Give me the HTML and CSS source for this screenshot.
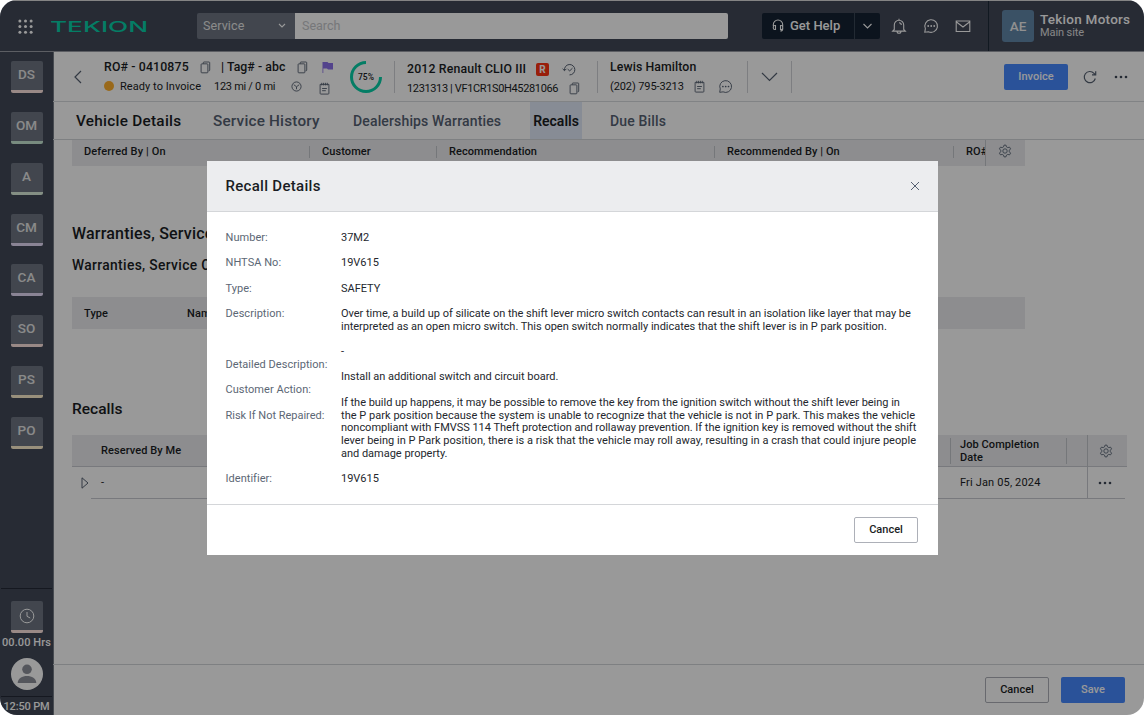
FILE: index.html
```
<!DOCTYPE html>
<html lang="en">
<head>
<meta charset="utf-8">
<title>Recall Details</title>
<link rel="stylesheet" href="styles.css">
</head>
<body>
<svg class="defs" width="0" height="0">
  <symbol id="copy" viewBox="0 0 12 14"><path d="M3.600 2.800V1.800q0-.8.800-.8h5.400q.8 0 .8.800v8q0 .8-.8.800H9.400M2 3h5.800q.8 0 .8.800v8.200q0 .8-.8.800H2q-.8 0-.8-.8V3.800q0-.8.800-.8z"/></symbol>
  <symbol id="note" viewBox="0 0 12 14"><path d="M1.200 2.500h9.600v9.800q0 .8-.8.800H2q-.8 0-.8-.8zM3 .8v2.800M5 .8v2.800M7 .8v2.800M9 .8v2.800M3.400 7h5.200M3.400 9.400h4"/></symbol>
  <symbol id="chat" viewBox="0 0 16 16"><path d="M1.800 14.200l.6-3.600A6.300 6.300 0 1 1 5.400 13.700z"/><path class="dots" d="M5.200 8h.01M8.200 8h.01M11.200 8h.01"/></symbol>
  <symbol id="gear" viewBox="0 0 16 16"><circle cx="8" cy="8" r="2.500"/><path d="M6.900 1.300h2.200l.6 2 1.500.8 2-.5 1.200 2-1.500 1.500v1.800l1.500 1.500-1.200 2-2-.5-1.500.8-.6 2H6.900l-.6-2-1.500-.8-2 .5-1.200-2 1.500-1.500V7.100L1.600 5.600l1.200-2 2 .5 1.500-.8z"/></symbol>
  <symbol id="more" viewBox="0 0 14 4"><circle cx="2" cy="2" r="1.300"/><circle cx="7" cy="2" r="1.300"/><circle cx="12" cy="2" r="1.300"/></symbol>
</svg>
<div class="frame">
  <header class="topbar">
    <svg class="apps" viewBox="0 0 16 16"><g fill="#fff"><circle cx="2" cy="2" r="1.600"/><circle cx="8" cy="2" r="1.600"/><circle cx="14" cy="2" r="1.600"/><circle cx="2" cy="8" r="1.600"/><circle cx="8" cy="8" r="1.600"/><circle cx="14" cy="8" r="1.600"/><circle cx="2" cy="14" r="1.600"/><circle cx="8" cy="14" r="1.600"/><circle cx="14" cy="14" r="1.600"/></g></svg>
    <svg class="logo" viewBox="0 0 98 16"><text x="-1" y="13.500" textLength="98" lengthAdjust="spacingAndGlyphs">TEKION</text></svg>
    <div class="scope"><span>Service</span><svg class="chev" viewBox="0 0 8 6"><path d="M1 1l3 3 3-3"/></svg></div>
    <div class="search">Search</div>
    <div class="help">
      <div class="help-main"><svg class="headset" viewBox="0 0 12 13"><path d="M1.300 7V5.700a4.700 4.700 0 0 1 9.400 0V10q0 2-2.400 2M3.500 6.500v4H2.700Q1.300 10.500 1.300 9V8q0-1.500 1.400-1.500zM8.500 6.500v4h.8q1.400 0 1.400-1.500V8q0-1.500-1.400-1.500z"/></svg><span>Get Help</span></div>
      <div class="help-more"><svg viewBox="0 0 10 7"><path d="M1 1l4 4 4-4"/></svg></div>
    </div>
    <div class="top-icons">
      <svg viewBox="0 0 16 16"><path d="M3.300 11.500V7a4.700 4.700 0 0 1 9.400 0v4.500l1.600 1.600H1.700zM8 2.300V.8M6 13.200a2 2 0 0 0 4 0M8 4.700a2.300 2.300 0 0 1 2.300 2.300"/></svg>
      <svg viewBox="0 0 16 16"><use href="#chat"/></svg>
      <svg viewBox="0 0 16 16"><path d="M1.200 3h13.600v10.500H1.200zM1.500 4l6.500 5 6.500-5"/></svg>
    </div>
    <div class="account">
      <div class="avatar">AE</div>
      <div class="dealer"><b>Tekion Motors</b><span>Main site</span></div>
    </div>
  </header>
  <div class="below">
    <nav class="side">
      <div class="tiles">
        <div class="tile rose">DS</div><div class="tile green">OM</div><div class="tile mint">A</div><div class="tile lilac">CM</div><div class="tile lilac">CA</div><div class="tile rose">SO</div><div class="tile sand">PS</div><div class="tile sand">PO</div>
      </div>
      <div class="status">
        <div class="tile rose clock"><svg viewBox="0 0 16 16"><circle cx="8" cy="8" r="6.800"/><path d="M8 4v4.300l3.200 1.700"/></svg></div>
        <div class="hrs">00.00 Hrs</div>
        <svg class="person" viewBox="0 0 32 32"><circle cx="16" cy="16" r="16" fill="#fff"/><circle cx="16" cy="11.300" r="4.800"/><path d="M6.700 25c0-9.500 18.600-9.500 18.600 0z"/></svg>
        <div class="time">12:50 PM</div>
      </div>
    </nav>
    <main>
      <section class="ro">
        <svg class="back" viewBox="0 0 8 14"><path d="M7 1L1 7l6 6"/></svg>
        <div class="ro-info">
          <div class="row r1"><b class="ro-num">RO# - 0410875</b><svg class="ic cp"><use href="#copy"/></svg><b class="tag">| Tag# - abc</b><svg class="ic cp cp2"><use href="#copy"/></svg><svg class="flag" viewBox="0 0 11 12"><path d="M.5 1h5l1 1H11v6.500H6l-1-1H1.300V12H.5z"/></svg></div>
          <div class="row r2"><i class="dot"></i><span class="ready">Ready to Invoice</span><span class="miles">123 mi / 0 mi</span><svg class="wheel" viewBox="0 0 12 12"><circle cx="6" cy="6" r="5"/><path d="M3 4l3 2.300L9 4M6 6.300V9"/></svg><svg class="ic note"><use href="#note"/></svg></div>
        </div>
        <svg class="ring" viewBox="0 0 32 32"><path d="M30.500 16A14.500 14.500 0 1 1 16 1.500"/><text x="16" y="19.200">75%</text></svg>
        <i class="vline"></i>
        <div class="car">
          <div class="row r1"><b class="model">2012 Renault CLIO III</b><span class="badge">R</span><svg class="hist" viewBox="0 0 14 12"><path d="M2.500 7A5.200 5.200 0 1 1 7.500 11.400M.6 5.300l1.900 1.900 1.900-1.900M5.700 5.700l2 1.700 2.800-2.800"/></svg></div>
          <div class="row r2"><span class="vin">1231313 | VF1CR1S0H45281066</span><svg class="ic cp"><use href="#copy"/></svg></div>
        </div>
        <i class="vline"></i>
        <div class="cust">
          <div class="row r1"><b class="name">Lewis Hamilton</b></div>
          <div class="row r2"><span class="phone">(202) 795-3213</span><svg class="ic note"><use href="#note"/></svg><svg class="ic bubble"><use href="#chat"/></svg></div>
        </div>
        <i class="vline"></i>
        <svg class="expand" viewBox="0 0 17 10"><path d="M1 1l7.500 7.500L16 1"/></svg>
        <i class="vline"></i>
        <div class="ro-actions">
          <button class="btn primary">Invoice</button>
          <svg class="refresh" viewBox="0 0 14 14"><path d="M12.300 8.500A5.600 5.600 0 1 1 11 3.300l1.200 1.400M12.700 1.300v3.500H9"/></svg>
          <svg class="more"><use href="#more"/></svg>
        </div>
      </section>
      <div class="tabs"><span class="tab t1">Vehicle Details</span><span class="tab t2">Service History</span><span class="tab t3">Dealerships Warranties</span><span class="tab t4">Recalls</span><span class="tab t5">Due Bills</span></div>
      <div class="content">
        <div class="thead jobs"><span class="c1">Deferred By | On</span><span class="c2">Customer</span><span class="c3">Recommendation</span><span class="c4">Recommended By | On</span><span class="c5">RO#</span><span class="cfg"><svg><use href="#gear"/></svg></span></div>
        <h2 class="h-war">Warranties, Service</h2>
        <h3>Warranties, Service C</h3>
        <div class="thead plans"><span class="p1">Type</span><span>Name</span></div>
        <h2 class="h-rec">Recalls</h2>
        <div class="recalls">
          <div class="thead rec"><span class="r-by">Reserved By Me</span><span class="r-date"><em>Job Completion<br>Date</em></span><span class="cfg"><svg><use href="#gear"/></svg></span></div>
          <div class="line"><svg class="tri" viewBox="0 0 8 12"><path d="M1 .8l6 5.200-6 5.200z"/></svg><div class="cells"><span class="r-by">-</span><span class="r-date">Fri Jan 05, 2024</span><span class="cfg"><svg class="more"><use href="#more"/></svg></span></div></div>
        </div>
      </div>
      <footer class="foot"><button class="btn plain">Cancel</button><button class="btn primary">Save</button></footer>
    </main>
  </div>
  <div class="overlay"></div>
  <div class="modal">
    <div class="m-head"><h1>Recall Details</h1><svg viewBox="0 0 10 10"><path d="M1 1l8 8M9 1L1 9"/></svg></div>
    <div class="m-body">
      <div class="labels"><span>Number:</span><span>NHTSA No:</span><span>Type:</span><span class="tall2">Description:</span><span>Detailed Description:</span><span>Customer Action:</span><span class="tall4">Risk If Not Repaired:</span><span>Identifier:</span></div>
      <div class="values">
        <p>37M2</p><p>19V615</p><p>SAFETY</p>
        <p>Over time, a build up of silicate on the shift lever micro switch contacts can result in an isolation like layer that may be<br>interpreted as an open micro switch. This open switch normally indicates that the shift lever is in P park position.</p>
        <p>-</p>
        <p>Install an additional switch and circuit board.</p>
        <p>If the build up happens, it may be possible to remove the key from the ignition switch without the shift lever being in<br><span class="wide">the P park position because the system is unable to recognize that the vehicle is not in P park. This makes the vehicle</span><br>noncompliant with FMVSS 114 Theft protection and rollaway prevention. If the ignition key is removed without the shift<br><span class="wide">lever being in P Park position, there is a risk that the vehicle may roll away, resulting in a crash that could injure people</span><br>and damage property.</p>
        <p>19V615</p>
      </div>
    </div>
    <div class="m-foot"><button class="btn plain">Cancel</button></div>
  </div>
</div>
</body>
</html>
```

FILE: styles.css
```
* { box-sizing: border-box; }
body { margin: 0; background: #fff; font: 11px/13px Roboto, "Liberation Sans", sans-serif; color: #1a1d24; }
svg { display: block; flex: none; fill: none; stroke: #566172; stroke-width: 1; }
b { font-weight: 500; }
h1, h2, h3, p { margin: 0; }
.defs { position: absolute; }
.dots { stroke-width: 1.800; stroke-linecap: round; }
.frame { position: relative; width: 1144px; height: 715px; border-radius: 17px; overflow: hidden; display: flex; flex-direction: column; background: #fff; }

/* Top bar */
.topbar { height: 52px; flex: none; display: flex; align-items: center; background: #414858; border-top: 1px solid #dcdcdc; border-bottom: 1px solid #9a9da5; color: #fff; }
.topbar svg { stroke: #fff; stroke-width: 1.100; }
.topbar .apps { width: 15px; height: 15px; margin-left: 18px; stroke: none; }
.topbar .logo { width: 98px; height: 16px; margin-left: 18px; stroke: none; }
.logo text { font: 500 14.500px Inter, sans-serif; fill: #08d0a8; }
.scope { width: 98px; height: 26px; margin-left: 48px; padding: 0 9px 1px 6px; border-radius: 2px 0 0 2px; background: #6e7683; color: #e8e8e8; display: flex; align-items: center; justify-content: space-between; font-size: 12.500px; letter-spacing: .1px; }
.scope .chev { width: 8px; height: 6px; }
.search { width: 433px; height: 26px; padding-left: 7px; border-radius: 0 2px 2px 0; background: #fff; color: #c5c7cb; font-size: 12.500px; line-height: 25px; }
.help { display: flex; width: 118px; height: 26px; margin-left: 34px; border-radius: 2px; overflow: hidden; background: #142232; }
.help-main { width: 93px; display: flex; align-items: center; padding: 0 0 1px 10px; gap: 6px; font-size: 13px; font-weight: 500; border-right: 1px solid #3a4656; }
.headset { width: 12px; height: 13px; }
.help-more { flex: 1; display: flex; align-items: center; justify-content: center; }
.help-more svg { width: 11px; height: 7px; }
.top-icons { display: flex; gap: 16px; margin-left: 11px; }
.top-icons svg { width: 16px; height: 16px; }
.account { display: flex; align-items: center; align-self: stretch; margin-left: 17px; padding-left: 13px; border-left: 1px solid #1d2a38; }
.avatar { width: 32px; height: 32px; border-radius: 3px; background: #6187a8; color: #f0f0f0; font-size: 13.500px; font-weight: 500; line-height: 32px; text-align: center; }
.dealer { margin-left: 6px; padding-bottom: 1px; display: flex; flex-direction: column; }
.dealer b { font-size: 13.500px; letter-spacing: .25px; }
.dealer span { letter-spacing: -.1px; color: #e0e0e0; }

/* Sidebar */
.below { flex: 1; display: flex; min-height: 0; }
.side { width: 54px; margin-right: -1px; background: #414858; display: flex; flex-direction: column; justify-content: space-between; align-items: center; border-right: 1px solid #777d88; }
.tiles { display: flex; flex-direction: column; gap: 18.850px; padding-top: 9px; }
.tile { width: 32px; height: 32px; border-radius: 2px; background: #6e7683; border-bottom: 3px solid; color: #e6e6e6; font-size: 13.500px; font-weight: 500; line-height: 27px; text-align: center; }
.rose { border-bottom-color: #ffe5e0; }
.green { border-bottom-color: #c8e8d4; }
.mint { border-bottom-color: #dcefdc; }
.lilac { border-bottom-color: #e6dcf8; }
.sand { border-bottom-color: #fff0cf; }
.status { width: 51px; border-top: 1px solid #232936; display: flex; flex-direction: column; align-items: center; color: #fff; font-weight: 500; }
.clock { margin-top: 12px; display: flex; align-items: center; justify-content: center; }
.clock svg { width: 16px; height: 16px; stroke: #fff; }
.hrs { margin-top: 3px; letter-spacing: .1px; white-space: nowrap; }
.person { width: 32px; height: 32px; margin-top: 9px; stroke: none; fill: #8d8f99; }
.time { width: 51px; margin-top: 6px; padding-top: 3px; height: 19px; border-top: 1px solid #232936; text-align: center; letter-spacing: -.15px; }

/* Repair order bar */
main { flex: 1; display: flex; flex-direction: column; min-width: 0; }
.ro { height: 50px; display: flex; align-items: center; border-bottom: 1px solid #d8dade; }
.back { width: 8px; height: 14px; margin-left: 21px; stroke-width: 1.200; }
.row { display: flex; align-items: center; height: 19px; white-space: nowrap; }
.row b { font-size: 12.300px; }
.ic { width: 11px; height: 13px; }
.ro-info { width: 240px; margin-left: 22px; }
.ro-num { width: 96px; letter-spacing: .15px; }
.tag { width: 75px; margin-left: 10px; letter-spacing: .05px; }
.cp2 { margin-left: 1px; }
.flag { width: 11px; height: 12px; margin-left: 14px; fill: #8b70ea; stroke: none; }
.dot { width: 10px; height: 10px; border-radius: 5px; background: #ffb02e; }
.ready { width: 94px; margin-left: 6px; letter-spacing: .06px; }
.miles { width: 77px; letter-spacing: -.28px; }
.wheel { width: 11px; height: 11px; }
.ro-info .note { margin: 5px 0 0 17px; }
.ring { width: 32px; height: 32px; margin-left: 6px; stroke: #08d0a8; stroke-width: 3; }
.ring text { font-size: 8.500px; font-weight: 500; fill: #1a1d24; stroke: none; text-anchor: middle; }
.vline { width: 1px; height: 32px; background: #d0d3d8; }
.ring + .vline { margin-left: 12px; }
.car { width: 190px; margin-left: 12px; padding-top: 5px; }
.model { width: 129px; letter-spacing: .15px; }
.badge { width: 13px; height: 13px; border-radius: 2px; background: #ff3312; color: #fff; font-size: 10px; font-weight: 700; text-align: center; }
.hist { width: 14px; height: 13px; margin-left: 13px; }
.vin { width: 162px; letter-spacing: -.36px; }
.cust { width: 138px; margin-left: 12px; margin-right: -1px; }
.name { letter-spacing: .1px; }
.phone { width: 84px; letter-spacing: -.1px; }
.bubble { width: 15px; height: 15px; margin-left: 13px; }
.expand { width: 17px; height: 10px; margin: 0 13px; stroke-width: 1.200; }
.ro-actions { margin-left: auto; display: flex; align-items: center; padding-right: 16px; }
.btn { width: 64px; height: 26px; padding: 0 0 1px; border-radius: 2px; font: 500 11px Roboto, sans-serif; }
.primary { border: 0; background: #4689ff; color: #fff; }
.plain { border: 1px solid #adb0b8; background: transparent; color: #1a1d24; }
.refresh { width: 14px; height: 14px; margin-left: 15px; stroke-width: 1.200; }
.more { width: 14px; height: 4px; fill: #3f4858; stroke: none; }
.refresh + .more { margin-left: 17px; }

/* Tabs */
.tabs { height: 38px; display: flex; padding-left: 23px; border-bottom: 1px solid #d3d5d9; font-size: 14px; font-weight: 500; line-height: 38px; color: #566172; white-space: nowrap; }
.t1 { width: 137px; color: #1a1d24; font-size: 15.300px; letter-spacing: .28px; }
.t2 { width: 140px; font-size: 15.300px; letter-spacing: .2px; }
.t3 { width: 177px; letter-spacing: .15px; }
.t4 { width: 52px; text-align: center; color: #1a1d24; background: #e1e9f8; font-weight: 600; }
.t5 { margin-left: 28px; letter-spacing: .15px; }

/* Tables */
.content { flex: 1; padding-left: 19px; }
.thead { display: flex; align-items: center; background: #ebecef; font-weight: 500; letter-spacing: .08px; white-space: nowrap; }
.jobs { width: 953px; height: 26px; padding: 0 0 3px 12px; }
.jobs span { border-left: 1px solid #c4c6cb; padding-left: 12px; height: 12px; line-height: 12px; }
.jobs .c1 { width: 225px; border: 0; padding: 0; letter-spacing: .15px; }
.jobs .c2 { width: 127px; }
.jobs .c3 { width: 278px; }
.jobs .c4 { width: 239px; }
.jobs .c5 { width: 32px; overflow: hidden; padding-left: 12px; }
.jobs .cfg { width: 40px; height: 26px; margin-bottom: -3px; padding: 4px 0 0 12px; }
.cfg svg:not(.more) { width: 14px; height: 14px; }
h2 { font-size: 15.500px; line-height: 18px; font-weight: 500; }
.h-war { margin-top: 59px; font-size: 16px; letter-spacing: .2px; }
h3 { margin-top: 14px; font-size: 13.800px; line-height: 16px; font-weight: 500; letter-spacing: .35px; }
.plans { width: 953px; height: 32px; margin-top: 24px; padding-left: 12px; }
.p1 { width: 103px; }
.h-rec { margin-top: 71px; }
.recalls { width: 1055px; margin-top: 17px; }
.rec { height: 32px; padding-left: 29px; border-bottom: 1px solid #c8cad0; }
.r-by { width: 849px; }
.rec .r-date { height: 26px; border-left: 1px solid #c4c6cb; border-right: 1px solid #c4c6cb; width: 117px; padding-left: 9px; }
.rec .r-date em { font-style: normal; display: block; }
.rec .cfg { width: 40px; height: 32px; margin-left: 20px; border-left: 1px solid #c4c6cb; display: flex; align-items: center; padding-left: 11px; }
.line { display: flex; align-items: center; padding: 0 2px 0 9px; }
.tri { width: 8px; height: 12px; }
.cells { flex: 1; height: 32px; margin-left: 2px; padding-left: 10px; display: flex; align-items: center; border-bottom: 1px solid #c8cad0; letter-spacing: .16px; }
.cells .r-by { width: 859px; }
.cells .r-date { width: 127px; }
.cells .cfg { height: 31px; display: flex; align-items: center; border-left: 1px solid #c8cad0; padding-left: 10px; }
.foot { height: 51px; display: flex; align-items: center; justify-content: flex-end; gap: 12px; padding-right: 19px; border-top: 1px solid #d3d5d9; }

/* Dialog */
.overlay { position: absolute; inset: 0; background: rgba(0, 0, 0, .4); }
.modal { position: absolute; left: 207px; top: 161px; width: 731px; height: 394px; background: #fff; display: flex; flex-direction: column; color: #24272d; }
.m-head { height: 51px; padding: 0 18px 0 18.500px; display: flex; align-items: center; justify-content: space-between; background: #ecedef; border-bottom: 1px solid #d4d6d9; }
.m-head svg { width: 10px; height: 10px; }
h1 { font-size: 15px; font-weight: 500; letter-spacing: .3px; color: #1a1d24; }
.m-body { flex: 1; display: flex; padding: 19.800px 0 0 18.500px; line-height: 12.700px; white-space: nowrap; }
.labels { width: 115.500px; display: flex; flex-direction: column; gap: 12.700px; color: #5c6775; letter-spacing: .04px; }
.tall2 { height: 38.100px; }
.tall4 { height: 50.800px; letter-spacing: -.02px; }
.values { display: flex; flex-direction: column; gap: 12.700px; letter-spacing: -.015px; }
.wide { letter-spacing: .03px; }
.m-foot { height: 51px; display: flex; align-items: center; justify-content: flex-end; padding: 0 20px 1px 0; border-top: 1px solid #d4d6d9; }
```
